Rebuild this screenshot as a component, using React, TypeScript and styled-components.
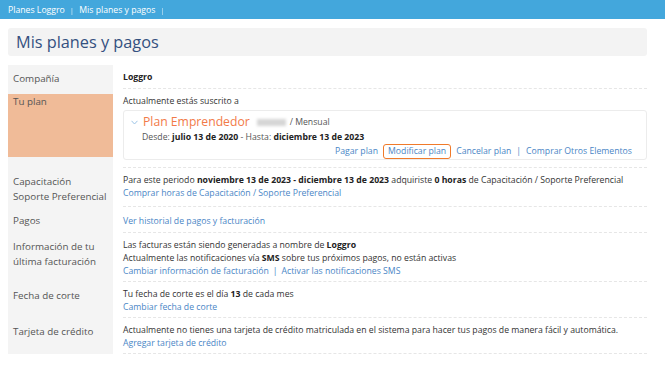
import styled, { createGlobalStyle } from 'styled-components';

const GlobalStyle = createGlobalStyle`
  body {
    margin: 0;
    background: #ffffff;
    font-family: 'Open Sans', 'Liberation Sans', sans-serif;
    color: #333333;
  }
`;

const TopBar = styled.div`
  height: 19px;
  background: #43a7dc;
  display: flex;
  align-items: center;
  padding: 0 8px;
  gap: 5px;
  font-size: 8.7px;
  color: #ffffff;
`;

const Crumb = styled.span`
  display: flex;
  align-items: center;
  gap: 5px;

  &::after {
    content: '|';
    opacity: 0.75;
    font-size: 8px;
  }
`;

const Page = styled.div`
  padding: 9px 18px 0 8px;
`;

const TitleBox = styled.div`
  height: 28px;
  background: #f3f3f3;
  border-radius: 3px;
  display: flex;
  align-items: center;
  padding: 0 8px;
`;

const Title = styled.h1`
  margin: 0;
  font-size: 16.3px;
  font-weight: 400;
  color: #34507f;
`;

const Table = styled.div`
  margin-top: 9px;
  display: grid;
  grid-template-columns: 105px 1fr;
  column-gap: 10px;
`;

const Label = styled.div`
  background: #f4f4f4;
  font-size: 9.8px;
  line-height: 15px;
  color: #555555;
  display: flex;
  flex-direction: column;
`;

const LabelInner = styled.div<{ $active?: boolean }>`
  flex: 1;
  padding: ${({ $active }) => ($active ? '0 5px' : '6px 5px 3px')};
  margin: ${({ $active }) => ($active ? '5px 0 11px' : '0')};
  background: ${({ $active }) => ($active ? '#f0bb98' : 'transparent')};
`;

const Cell = styled.div<{ $extra?: number }>`
  font-size: 8.7px;
  line-height: 13px;
  padding: ${({ $extra = 0 }) => `${6 + $extra}px 0 ${3 + $extra}px`};
  border-bottom: 1px dashed #e6e6e6;
`;

const Strong = styled.b`
  font-weight: 700;
  color: #222222;
`;

const Link = styled.a`
  color: #4a86c6;
  text-decoration: none;
  cursor: pointer;
`;

const Sep = styled.span<{ $tight?: boolean }>`
  color: #4a86c6;
  margin: ${({ $tight }) => ($tight ? '0' : '0 4px')};
`;

const PlanBox = styled.div`
  margin: 2px 0 4px;
  border: 1px solid #ececec;
  border-radius: 3px;
  padding: 2px 14px 0 7px;
`;

const PlanHead = styled.div`
  display: flex;
  align-items: center;
  height: 17px;
`;

const Chevron = styled.svg`
  width: 7px;
  height: 5px;
  margin: 2px 5px 0 0;
`;

const PlanName = styled.span`
  font-size: 12.2px;
  line-height: 17px;
  color: #f27a48;
`;

const Blurred = styled.span`
  display: inline-block;
  width: 29px;
  height: 7px;
  background: #d6d6d6;
  filter: blur(1.4px);
  margin: 1px 4px 0 7px;
`;

const Period = styled.span`
  font-size: 8.7px;
  color: #555555;
  margin-top: 2px;
`;

const Dates = styled.div`
  padding-left: 11px;
  line-height: 14px;
  color: #555555;
`;

const Actions = styled.div`
  display: flex;
  justify-content: flex-end;
  align-items: center;
  gap: 5px;
`;

const Highlighted = styled(Link)`
  border: 1.5px solid #f07a2a;
  border-radius: 3px;
  padding: 0 4px;
  line-height: 13px;
`;

export default function App() {
  return (
    <>
      <GlobalStyle />
      <TopBar>
        <Crumb>Planes Loggro</Crumb>
        <Crumb>Mis planes y pagos</Crumb>
      </TopBar>
      <Page>
        <TitleBox>
          <Title>Mis planes y pagos</Title>
        </TitleBox>
        <Table>
          <Label>
            <LabelInner>Compañía</LabelInner>
          </Label>
          <Cell>
            <Strong>Loggro</Strong>
          </Cell>

          <Label>
            <LabelInner $active>Tu plan</LabelInner>
          </Label>
          <Cell>
            Actualmente estás suscrito a
            <PlanBox>
              <PlanHead>
                <Chevron viewBox="0 0 7 5">
                  <path d="M0.5 0.8 L3.5 4 L6.5 0.8" fill="none" stroke="#9cc4e6" strokeWidth="1" />
                </Chevron>
                <PlanName>Plan Emprendedor</PlanName>
                <Blurred />
                <Period>/ Mensual</Period>
              </PlanHead>
              <Dates>
                Desde: <Strong>julio 13 de 2020</Strong> - Hasta: <Strong>diciembre 13 de 2023</Strong>
              </Dates>
              <Actions>
                <Link>Pagar plan</Link>
                <Highlighted>Modificar plan</Highlighted>
                <Link>Cancelar plan</Link>
                <Sep $tight>|</Sep>
                <Link>Comprar Otros Elementos</Link>
              </Actions>
            </PlanBox>
          </Cell>

          <Label>
            <LabelInner>
              Capacitación
              <br />
              Soporte Preferencial
            </LabelInner>
          </Label>
          <Cell>
            Para este periodo <Strong>noviembre 13 de 2023 - diciembre 13 de 2023</Strong> adquiriste{' '}
            <Strong>0 horas</Strong> de Capacitación / Soporte Preferencial
            <br />
            <Link>Comprar horas de Capacitación / Soporte Preferencial</Link>
          </Cell>

          <Label>
            <LabelInner>Pagos</LabelInner>
          </Label>
          <Cell $extra={1.5}>
            <Link>Ver historial de pagos y facturación</Link>
          </Cell>

          <Label>
            <LabelInner>
              Información de tu
              <br />
              última facturación
            </LabelInner>
          </Label>
          <Cell>
            Las facturas están siendo generadas a nombre de <Strong>Loggro</Strong>
            <br />
            Actualmente las notificaciones vía <Strong>SMS</Strong> sobre tus próximos pagos, no están activas
            <br />
            <Link>Cambiar información de facturación</Link>
            <Sep>|</Sep>
            <Link>Activar las notificaciones SMS</Link>
          </Cell>

          <Label>
            <LabelInner>Fecha de corte</LabelInner>
          </Label>
          <Cell>
            Tu fecha de corte es el día <Strong>13</Strong> de cada mes
            <br />
            <Link>Cambiar fecha de corte</Link>
          </Cell>

          <Label>
            <LabelInner>Tarjeta de crédito</LabelInner>
          </Label>
          <Cell>
            Actualmente no tienes una tarjeta de crédito matriculada en el sistema para hacer tus pagos de manera
            fácil y automática.
            <br />
            <Link>Agregar tarjeta de crédito</Link>
          </Cell>
        </Table>
      </Page>
    </>
  );
}
